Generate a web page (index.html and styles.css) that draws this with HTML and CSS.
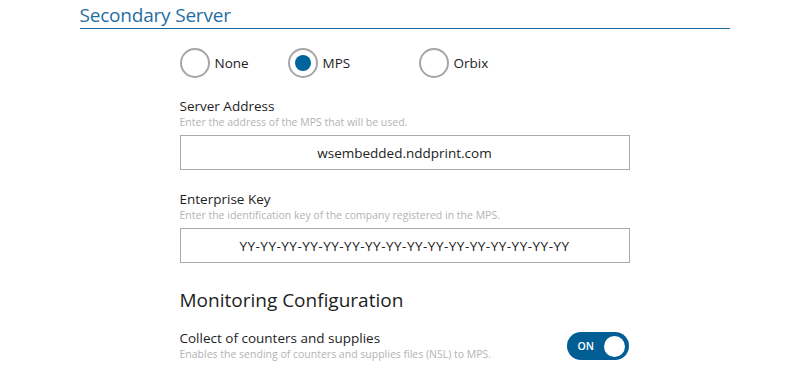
FILE: index.html
```html
<!DOCTYPE html>
<html lang="en">
<head>
    <meta charset="UTF-8">
    <meta name="viewport" content="width=device-width, initial-scale=1.0">
    <title>Secondary Server</title>
    <link rel="stylesheet" href="styles.css">
</head>
<body>
    <div class="section">
        <h2 class="section-title">Secondary Server</h2>

        <div class="content">
            <div class="radio-group">
                <label class="radio">
                    <span class="radio-circle"></span>
                    <span>None</span>
                </label>
                <label class="radio">
                    <span class="radio-circle checked"></span>
                    <span>MPS</span>
                </label>
                <label class="radio">
                    <span class="radio-circle"></span>
                    <span>Orbix</span>
                </label>
            </div>

            <div class="field">
                <div class="field-label">Server Address</div>
                <div class="field-hint">Enter the address of the MPS that will be used.</div>
                <input class="field-input" type="text" value="wsembedded.nddprint.com">
            </div>

            <div class="field">
                <div class="field-label">Enterprise Key</div>
                <div class="field-hint">Enter the identification key of the company registered in the MPS.</div>
                <input class="field-input key-input" type="text" value="YY-YY-YY-YY-YY-YY-YY-YY-YY-YY-YY-YY-YY-YY-YY-YY">
            </div>

            <h3 class="sub-title">Monitoring Configuration</h3>

            <div class="switch-row">
                <div>
                    <div class="field-label">Collect of counters and supplies</div>
                    <div class="field-hint">Enables the sending of counters and supplies files (NSL) to MPS.</div>
                </div>
                <div class="switch">
                    <span class="switch-text">ON</span>
                    <span class="switch-knob"></span>
                </div>
            </div>
        </div>
    </div>
</body>
</html>
```

FILE: styles.css
```css
body {
    margin: 0;
    font-family: "Open Sans", "Noto Sans", Arial, sans-serif;
    color: #222;
    background: #fff;
}

.section {
    width: 650px;
    margin: 0 auto;
}

.section-title {
    margin: 0;
    padding-top: 2px;
    font-size: 19px;
    font-weight: normal;
    line-height: 26px;
    color: #1f6ea3;
    border-bottom: 1px solid #0f679c;
    letter-spacing: -0.2px;
}

.content {
    width: 450px;
    margin: 0 auto;
}

.radio-group {
    display: grid;
    grid-template-columns: 108px 131px auto;
    margin-top: 19px;
}

.radio {
    display: flex;
    align-items: center;
    gap: 5px;
    font-size: 13.5px;
}

.radio-circle {
    width: 26px;
    height: 26px;
    border: 2px solid #a6a6a6;
    border-radius: 50%;
    display: flex;
    align-items: center;
    justify-content: center;
}

.radio-circle.checked::after {
    content: "";
    width: 16px;
    height: 16px;
    border-radius: 50%;
    background: #00649c;
}

.field {
    margin-top: 19px;
}

.field + .field {
    margin-top: 20px;
}

.field-label {
    font-size: 13.5px;
    line-height: 18px;
    color: #1e1e1e;
}

.field-hint {
    font-size: 10.5px;
    line-height: 14px;
    color: #b3b3b3;
}

.field-input {
    display: block;
    box-sizing: border-box;
    width: 450px;
    height: 35px;
    margin-top: 6px;
    border: 1px solid #aaa;
    font-family: inherit;
    font-size: 13.5px;
    color: #222;
    text-align: center;
    outline: none;
}

.key-input {
    letter-spacing: 0.5px;
}

.sub-title {
    margin: 24px 0 0;
    font-size: 19px;
    font-weight: normal;
    line-height: 26px;
    color: #1e1e1e;
}

.switch-row {
    display: flex;
    justify-content: space-between;
    align-items: center;
    margin-top: 16px;
}

.switch {
    box-sizing: border-box;
    width: 62px;
    height: 28px;
    border-radius: 14px;
    background: #005e95;
    display: flex;
    align-items: center;
    justify-content: space-between;
    padding: 0 2px 0 11px;
    margin: 2px 1px 0 0;
}

.switch-text {
    font-size: 10.5px;
    font-weight: 600;
    color: #fff;
}

.switch-knob {
    box-sizing: border-box;
    width: 25px;
    height: 25px;
    border-radius: 50%;
    background: #fff;
    border: 2px solid #005e95;
}
```
